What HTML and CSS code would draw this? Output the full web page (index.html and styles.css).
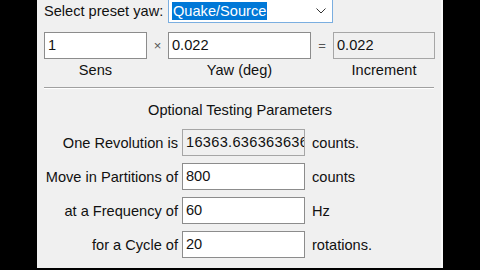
FILE: index.html
```html
<!DOCTYPE html>
<html>
    <head>
        <title>Sensitivity Matcher</title>
        <link rel="stylesheet" href="styles.css">
    </head>
    <body>
        <div class="Panel">
            <div class="PresetRow">
                <span class="Label">Select preset yaw:</span>
                <div class="Combo">
                    <span class="ComboText">Quake/Source</span>
                    <svg class="Chevron" width="10" height="6" viewBox="0 0 10 6">
                        <path d="M0.5 0.5 L5 5 L9.5 0.5" fill="none" stroke="#333" stroke-width="1"/>
                    </svg>
                </div>
            </div>

            <div class="Calc">
                <div class="Box">1</div>
                <div class="Op">×</div>
                <div class="Box">0.022</div>
                <div class="Op">=</div>
                <div class="Box ReadOnly">0.022</div>
                <div class="Caption">Sens</div>
                <div></div>
                <div class="Caption">Yaw (deg)</div>
                <div></div>
                <div class="Caption">Increment</div>
            </div>

            <div class="Group">
                <div class="GroupTitle">Optional Testing Parameters</div>
                <div class="Params">
                    <span class="ParamLabel">One Revolution is</span>
                    <div class="Box ReadOnly Clip">16363.63636363636</div>
                    <span class="Unit">counts.</span>

                    <span class="ParamLabel">Move in Partitions of</span>
                    <div class="Box">800</div>
                    <span class="Unit">counts</span>

                    <span class="ParamLabel">at a Frequency of</span>
                    <div class="Box">60</div>
                    <span class="Unit">Hz</span>

                    <span class="ParamLabel">for a Cycle of</span>
                    <div class="Box">20</div>
                    <span class="Unit">rotations.</span>
                </div>
            </div>
        </div>
    </body>
</html>
```

FILE: styles.css
```css
html, body {
    margin: 0;
    height: 100%;
    background-color: #000;
    overflow: hidden;
}
body {
    font-family: "Liberation Sans", Arial, sans-serif;
    font-size: 14.6px;
    color: #111;
}
.Panel {
    margin-left: 37px;
    width: 406px;
    height: 270px;
    padding-left: 7px;
    background-color: #f0f0f0;
    /* thin light edge like the window frame */
    border-right: 2px solid #f9f9f9;
    box-sizing: border-box;
}
.PresetRow {
    display: flex;
    align-items: center;
    margin-top: -2px;
    height: 25px;
}
.Label {
    width: 124px;
}
.Combo {
    width: 165px;
    height: 25px;
    box-sizing: border-box;
    border: 1px solid #7aaee0;
    background-color: #fff;
    display: flex;
    align-items: center;
    justify-content: space-between;
    padding: 0 6px 0 3px;
}
.ComboText {
    background-color: #0078d7;
    color: #fff;
    padding: 1px 1px;
    line-height: 16px;
}
.Chevron {
    margin-top: 1px;
}
.Calc {
    display: grid;
    grid-template-columns: 103px 21px 143px 22px 102px;
    margin-top: 9px;
}
.Box {
    height: 27px;
    box-sizing: border-box;
    border: 1px solid #8c8c8c;
    background-color: #fff;
    padding-left: 3px;
    line-height: 25px;
    white-space: nowrap;
}
.ReadOnly {
    background-color: #f0f0f0;
    border-color: #a6a6a6;
}
.Clip {
    overflow: hidden;
    text-overflow: clip;
    letter-spacing: 0.3px;
}
.Op {
    text-align: center;
    line-height: 27px;
    color: #555;
    font-size: 13px;
}
.Caption {
    text-align: center;
    line-height: 22px;
}
.Group {
    margin-top: 6px;
    width: 390px;
    /* Etched line like a windows group box */
    border-top: 1px solid #a0a0a0;
    box-shadow: inset 0 1px 0 #fff;
}
.GroupTitle {
    text-align: center;
    padding-top: 13px;
    line-height: 18px;
    margin-right: -2px;
}
.Params {
    display: grid;
    grid-template-columns: 134px 123px auto;
    column-gap: 4px;
    row-gap: 7px;
    margin-top: 10px;
    align-items: center;
}
.ParamLabel {
    text-align: right;
}
.Unit {
    padding-left: 3px;
}
```
